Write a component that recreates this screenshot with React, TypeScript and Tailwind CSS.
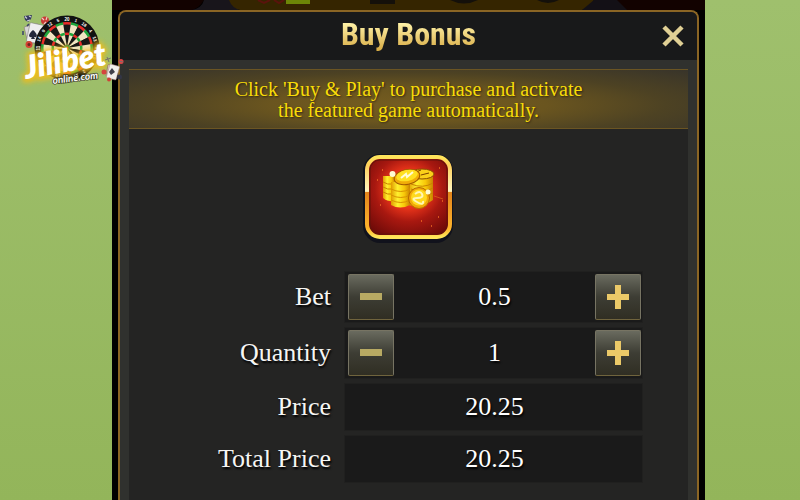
import { useState } from "react";

function DartLogo() {
  const cx = 67;
  const cy = 48;
  const point = (r: number, deg: number) => {
    const a = ((deg - 90) * Math.PI) / 180;
    return `${cx + r * Math.cos(a)} ${cy + r * Math.sin(a)}`;
  };
  const wedge = (r0: number, r1: number, i: number) => {
    const a = i * 18 - 9;
    const b = i * 18 + 9;
    return `M${point(r0, a)}L${point(r1, a)}A${r1} ${r1} 0 0 1 ${point(r1, b)}L${point(r0, b)}A${r0} ${r0} 0 0 0 ${point(r0, a)}Z`;
  };
  const scores = [20, 1, 18, 4, 13, 6, 10, 15, 2, 17, 3, 19, 7, 16, 8, 11, 14, 9, 12, 5];
  return (
    <svg viewBox="0 0 130 100" className="h-[100px] w-[130px]" role="img" aria-label="Jilibet online.com">
      <defs>
        <filter id="glow" x="-20%" y="-40%" width="140%" height="180%">
          <feGaussianBlur stdDeviation="2.5" />
        </filter>
      </defs>
      <g>
        <path d="M24 16l8-1-1 4-3 3-3-2Z" fill="#35395f" />
        <path d="M25 16.500l2 2M29 16l2 1M27 21l3-1" stroke="#cfd0db" strokeWidth="1.200" />
        <circle cx="45" cy="20.500" r="4" fill="#c93a35" />
        <path d="M42 18l2 2M47 17l-1 3M44 24l2-2" stroke="#eec9c4" strokeWidth="1.200" />
        <rect x="26" y="25" width="14" height="18" rx="1" fill="#d8d6d7" stroke="#816e70" strokeWidth=".5" transform="rotate(-14 33 34)" />
        <rect x="28" y="24" width="15" height="19" rx="1" fill="#eeeeef" stroke="#777" strokeWidth=".5" transform="rotate(12 36 34)" />
        <path d="M33 30c-6 5-4 8-1 7l-1 2h4l-1-2c4 1 4-3-1-7Z" fill="#22283b" />
        <path d="M23 31v4M27 26l2-2" stroke="#39416a" strokeWidth="1.500" />
        <circle cx="29" cy="44.500" r="3.500" fill="#d54334" />
        <circle cx="29" cy="44.500" r="1.500" fill="#6b2320" />
      </g>
      <circle cx={cx} cy={cy} r="32.500" fill="#121211" />
      {scores.map((n, i) => (
        <g key={n}>
          <path d={wedge(0, 25, i)} fill={i % 2 ? "#f1e4c2" : "#171716"} />
          <path d={wedge(23.5, 26, i)} fill={i % 2 ? "#1fa53b" : "#e82b27"} />
          <path d={wedge(13, 15.5, i)} fill={i % 2 ? "#1fa53b" : "#e82b27"} />
          <text
            x={cx}
            y={cy - 27.5}
            transform={`rotate(${i * 18} ${cx} ${cy})`}
            textAnchor="middle"
            fontSize="4.500"
            fill="#ffffff"
            fontFamily="Liberation Sans, sans-serif"
            fontWeight="bold"
          >
            {n}
          </text>
        </g>
      ))}
      <circle cx={cx} cy={cy} r="3" fill="#1f963b" />
      <circle cx={cx} cy={cy} r="1.500" fill="#df2b27" />
      <g fontFamily="Lato, sans-serif" fontWeight="900" fontStyle="italic">
        <text x="26" y="80" fontSize="32" transform="rotate(-10 26 80)" fill="#f5bc16" stroke="#f5bc16" strokeWidth="6" opacity=".85" filter="url(#glow)">
          Jilibet
        </text>
        <text x="26" y="79" fontSize="32" transform="rotate(-10 26 79)" fill="#ffffff" fontWeight="800">
          Jilibet
        </text>
        <text x="53" y="84" fontSize="10" fontWeight="700" transform="rotate(-7 53 84)" fill="#ffffff" stroke="#3a3720" strokeWidth="1.500" paintOrder="stroke">
          online.com
        </text>
      </g>
      <g>
        <rect x="107" y="65" width="8" height="12" rx="1" fill="#d6cfc9" stroke="#8d5550" strokeWidth=".5" transform="rotate(10 111 71)" />
        <rect x="108" y="65" width="10" height="14" rx="1" fill="#f1eeea" stroke="#aa8985" strokeWidth=".5" transform="rotate(16 113 72)" />
        <path d="M112 68l3 4-4 3-2-3Z" fill="#40404a" />
        <circle cx="121" cy="61.500" r="2.500" fill="#d44" />
        <circle cx="104" cy="72" r="2.500" fill="#d5453e" />
        <circle cx="109" cy="79.500" r="2" fill="#cf4038" />
        <circle cx="119.500" cy="77" r="2.500" fill="#323545" />
        <path d="M105 60l6-2M107 57l2 5M119 61l4 1" stroke="#77706c" />
      </g>
    </svg>
  );
}

function CoinsIcon() {
  return (
    <svg viewBox="0 0 92 92" className="size-[92px]" role="img" aria-label="Bonus coins">
      <defs>
        <linearGradient id="frame" x2="0" y2="1">
          <stop offset="0" stopColor="#ffe45a" />
          <stop offset=".1" stopColor="#ffd05a" />
          <stop offset=".43" stopColor="#fff6c0" />
          <stop offset=".44" stopColor="#e2841b" />
          <stop offset=".9" stopColor="#ffb52c" />
          <stop offset="1" stopColor="#ffe65a" />
        </linearGradient>
        <radialGradient id="red" cx=".5" cy=".4" r=".68">
          <stop offset="0" stopColor="#ff5a1c" />
          <stop offset=".35" stopColor="#e8341a" />
          <stop offset=".6" stopColor="#a81810" />
          <stop offset="1" stopColor="#6b0a08" />
        </radialGradient>
        <linearGradient id="gold">
          <stop offset="0" stopColor="#e09a00" />
          <stop offset=".35" stopColor="#fff02e" />
          <stop offset=".7" stopColor="#f8c808" />
          <stop offset="1" stopColor="#c98300" />
        </linearGradient>
      </defs>
      <rect x="0" y="1" width="90" height="89" rx="17" fill="#11121c" />
      <rect x="4" y="4" width="83" height="80" rx="13" fill="url(#red)" stroke="url(#frame)" strokeWidth="4" />
      <rect x="7" y="7" width="77" height="74" rx="10" fill="none" stroke="#63130b" strokeWidth="1" />
      <path d="M20 23v22q5 4 12 3V23Z" fill="url(#gold)" />
      <path d="M45 20v32q14 3 25-5V20Z" fill="url(#gold)" />
      <path d="M20 29q5 3 9 2M20 34q5 3 9 2M20 39q5 3 9 2M48 31q12 5 22-1M48 36q12 5 22-1M60 42q6 0 10-2" fill="none" stroke="#c98200" />
      <ellipse cx="59" cy="21" rx="12" ry="5" fill="#fbd01a" stroke="#8a4b00" />
      <path d="M53 19l5-2M58 22l8-2M51 22l4 2" stroke="#7b3e00" />
      <path d="M28 29v23q9 5 19 0V29Z" fill="url(#gold)" />
      <path d="M28 36q10 5 19 0M28 42q10 5 19 0M28 47q10 5 19 0" fill="none" stroke="#d89200" />
      <ellipse cx="44" cy="24" rx="13" ry="7.500" transform="rotate(-12 44 24)" fill="#f1ad08" stroke="#a35a00" />
      <ellipse cx="44" cy="22.500" rx="11" ry="5.500" transform="rotate(-12 44 22.500)" fill="#ffe020" />
      <path d="M38 25l5-4 1 3 6-5" fill="none" stroke="#fffbd8" strokeWidth="2" />
      <circle cx="56" cy="45" r="10.500" fill="#f0a808" stroke="#b86900" />
      <circle cx="56" cy="44.500" r="8" fill="#ffd91d" />
      <path d="M52 41q5-4 7 0t-5 4 0 4 6-1" fill="none" stroke="#fff6b6" strokeWidth="2" />
      <circle cx="29.500" cy="21" r="3" fill="#fffbd0" />
      <circle cx="65" cy="39" r="2.500" fill="#fffbd0" />
      <path d="M71 43l9 3" stroke="#e8741c" opacity=".6" />
      <path d="M14 27h1M19 17h1M76 15h1M79 48h1M75 64h1M68 73h1M58 68h1M17 52h1" stroke="#f06b25" strokeWidth="1.500" />
    </svg>
  );
}

const labelClass = "self-center pr-[14px] text-right text-[26px] leading-[46px] text-[#f6f6f4] [text-shadow:1px_2px_2px_#000]";
const fieldClass = "flex items-center justify-between bg-[#1a1a1a] pr-px pl-[3px] ring-1 ring-[#20201f]";
const valueClass = "min-w-0 flex-1 bg-transparent text-center text-[26px] leading-[46px] text-white outline-none [text-shadow:1px_2px_2px_#000]";

function StepButton({ plus, label, onClick }: { plus?: boolean; label: string; onClick: () => void }) {
  return (
    <button
      type="button"
      aria-label={label}
      onClick={onClick}
      className="flex size-[46px] shrink-0 items-center justify-center rounded-[2px] border border-[#777463] border-b-[#70643d] bg-linear-to-b from-[#6a6b5f] via-[#3d3d34] to-[#302e23]"
    >
      <svg viewBox="0 0 24 24" className="size-6">
        <path d={plus ? "M9 0h6v9h8v6h-8v9H9v-9H1V9h8Z" : "M1 8h22v7H1Z"} fill={plus ? "#ebc968" : "#b8aa63"} />
      </svg>
    </button>
  );
}

export default function App() {
  const [bet, setBet] = useState(0.5);
  const [quantity, setQuantity] = useState(1);
  const price = bet * 40.5;

  return (
    <div className="relative flex min-h-screen bg-linear-to-b from-[#9fc06d] to-[#93b55a] pr-[95px] pl-28 font-['Liberation_Serif',serif]">
      <div className="absolute top-0 left-0 z-10">
        <DartLogo />
      </div>

      <main className="relative flex flex-1 flex-col bg-black px-[6px] pt-[10px]">
        <svg viewBox="0 0 593 10" preserveAspectRatio="none" className="absolute top-0 left-0 h-[10px] w-full" aria-hidden="true">
          <path d="M0 0h92q-5 8-12 10H0Z" fill="#120200" />
          <path d="M92 0h27l8 10H80Q90 8 92 0Z" fill="#18151b" />
          <path d="M117 0h365q-5 8-12 10H128Q120 8 117 0Z" fill="#352500" />
          <path d="M146 0l6 3 6-3M162 0l5 3 5-3" fill="none" stroke="#5a130c" strokeWidth="2" />
          <path d="M174 0h24v4h-24Z" fill="#6d8607" />
          <path d="M148 0h25v4h-25Z" fill="none" />
          <path d="M258 0h25v4h-25ZM338 0h28q-14 7-28 0M425 0h22q-11 6-22 0" fill="#14100a" />
          <path d="M482 0h28l8 10h-48Z" fill="#131016" />
          <path d="M505 0h88v10h-78Z" fill="#120200" />
        </svg>

        <section
          aria-labelledby="dialog-title"
          className="relative flex flex-1 flex-col rounded-t-lg border-2 border-b-0 border-[#8a6524] bg-[#30312e]"
        >
          <header className="grid h-12 grid-cols-[48px_1fr_48px] items-center rounded-t-md bg-[#18191a]">
            <h1
              id="dialog-title"
              className="col-start-2 bg-linear-to-b from-[#fff3a8] from-20% to-[#d9ae46] to-80% bg-clip-text pb-1 text-center font-['Liberation_Sans_Narrow','Roboto_Condensed',sans-serif] text-[32px] leading-10 font-bold text-transparent"
            >
              Buy Bonus
            </h1>
            <button type="button" aria-label="Close" className="flex size-12 items-center justify-center">
              <svg viewBox="0 0 22 22" className="size-[22px]">
                <path d="M2 2l18 18M20 2L2 20" stroke="#e0d095" strokeWidth="4.500" />
              </svg>
            </button>
          </header>

          <div className="mx-[9px] mt-[9px] flex flex-1 flex-col bg-[#242423]">
            <p className="border-y border-[#6b5523] bg-[radial-gradient(ellipse_at_50%_60%,#755d20_0%,#6a551f_35%,#4d4223_65%,#38342a_100%)] pt-[9px] pb-[7px] text-center text-[20px] leading-[21px] text-[#f8dc08] [text-shadow:1px_1px_2px_#0008]">
              Click 'Buy &amp; Play' to purchase and activate
              <br />
              the featured game automatically.
            </p>

            <div className="mt-6 flex justify-center">
              <CoinsIcon />
            </div>

            <form
              onSubmit={(e) => e.preventDefault()}
              className="mt-[27px] mr-[46px] mb-[19px] grid grid-cols-[1fr_297px] gap-y-[6px]"
            >
              <label htmlFor="bet" className={labelClass}>Bet</label>
              <div className={`${fieldClass} h-[50px]`}>
                <StepButton label="Decrease bet" onClick={() => setBet(Math.max(0.5, bet - 0.5))} />
                <input id="bet" className={valueClass} value={bet} readOnly />
                <StepButton plus label="Increase bet" onClick={() => setBet(bet + 0.5)} />
              </div>

              <label htmlFor="quantity" className={labelClass}>Quantity</label>
              <div className={`${fieldClass} h-[50px]`}>
                <StepButton label="Decrease quantity" onClick={() => setQuantity(Math.max(1, quantity - 1))} />
                <input id="quantity" className={valueClass} value={quantity} readOnly />
                <StepButton plus label="Increase quantity" onClick={() => setQuantity(quantity + 1)} />
              </div>

              <label htmlFor="price" className={labelClass}>Price</label>
              <div className={`${fieldClass} h-[46px]`}>
                <output id="price" className={valueClass}>{price.toFixed(2)}</output>
              </div>

              <label htmlFor="total" className={labelClass}>Total Price</label>
              <div className={`${fieldClass} h-[46px]`}>
                <output id="total" className={valueClass}>{(price * quantity).toFixed(2)}</output>
              </div>
            </form>
          </div>
        </section>
      </main>
    </div>
  );
}
